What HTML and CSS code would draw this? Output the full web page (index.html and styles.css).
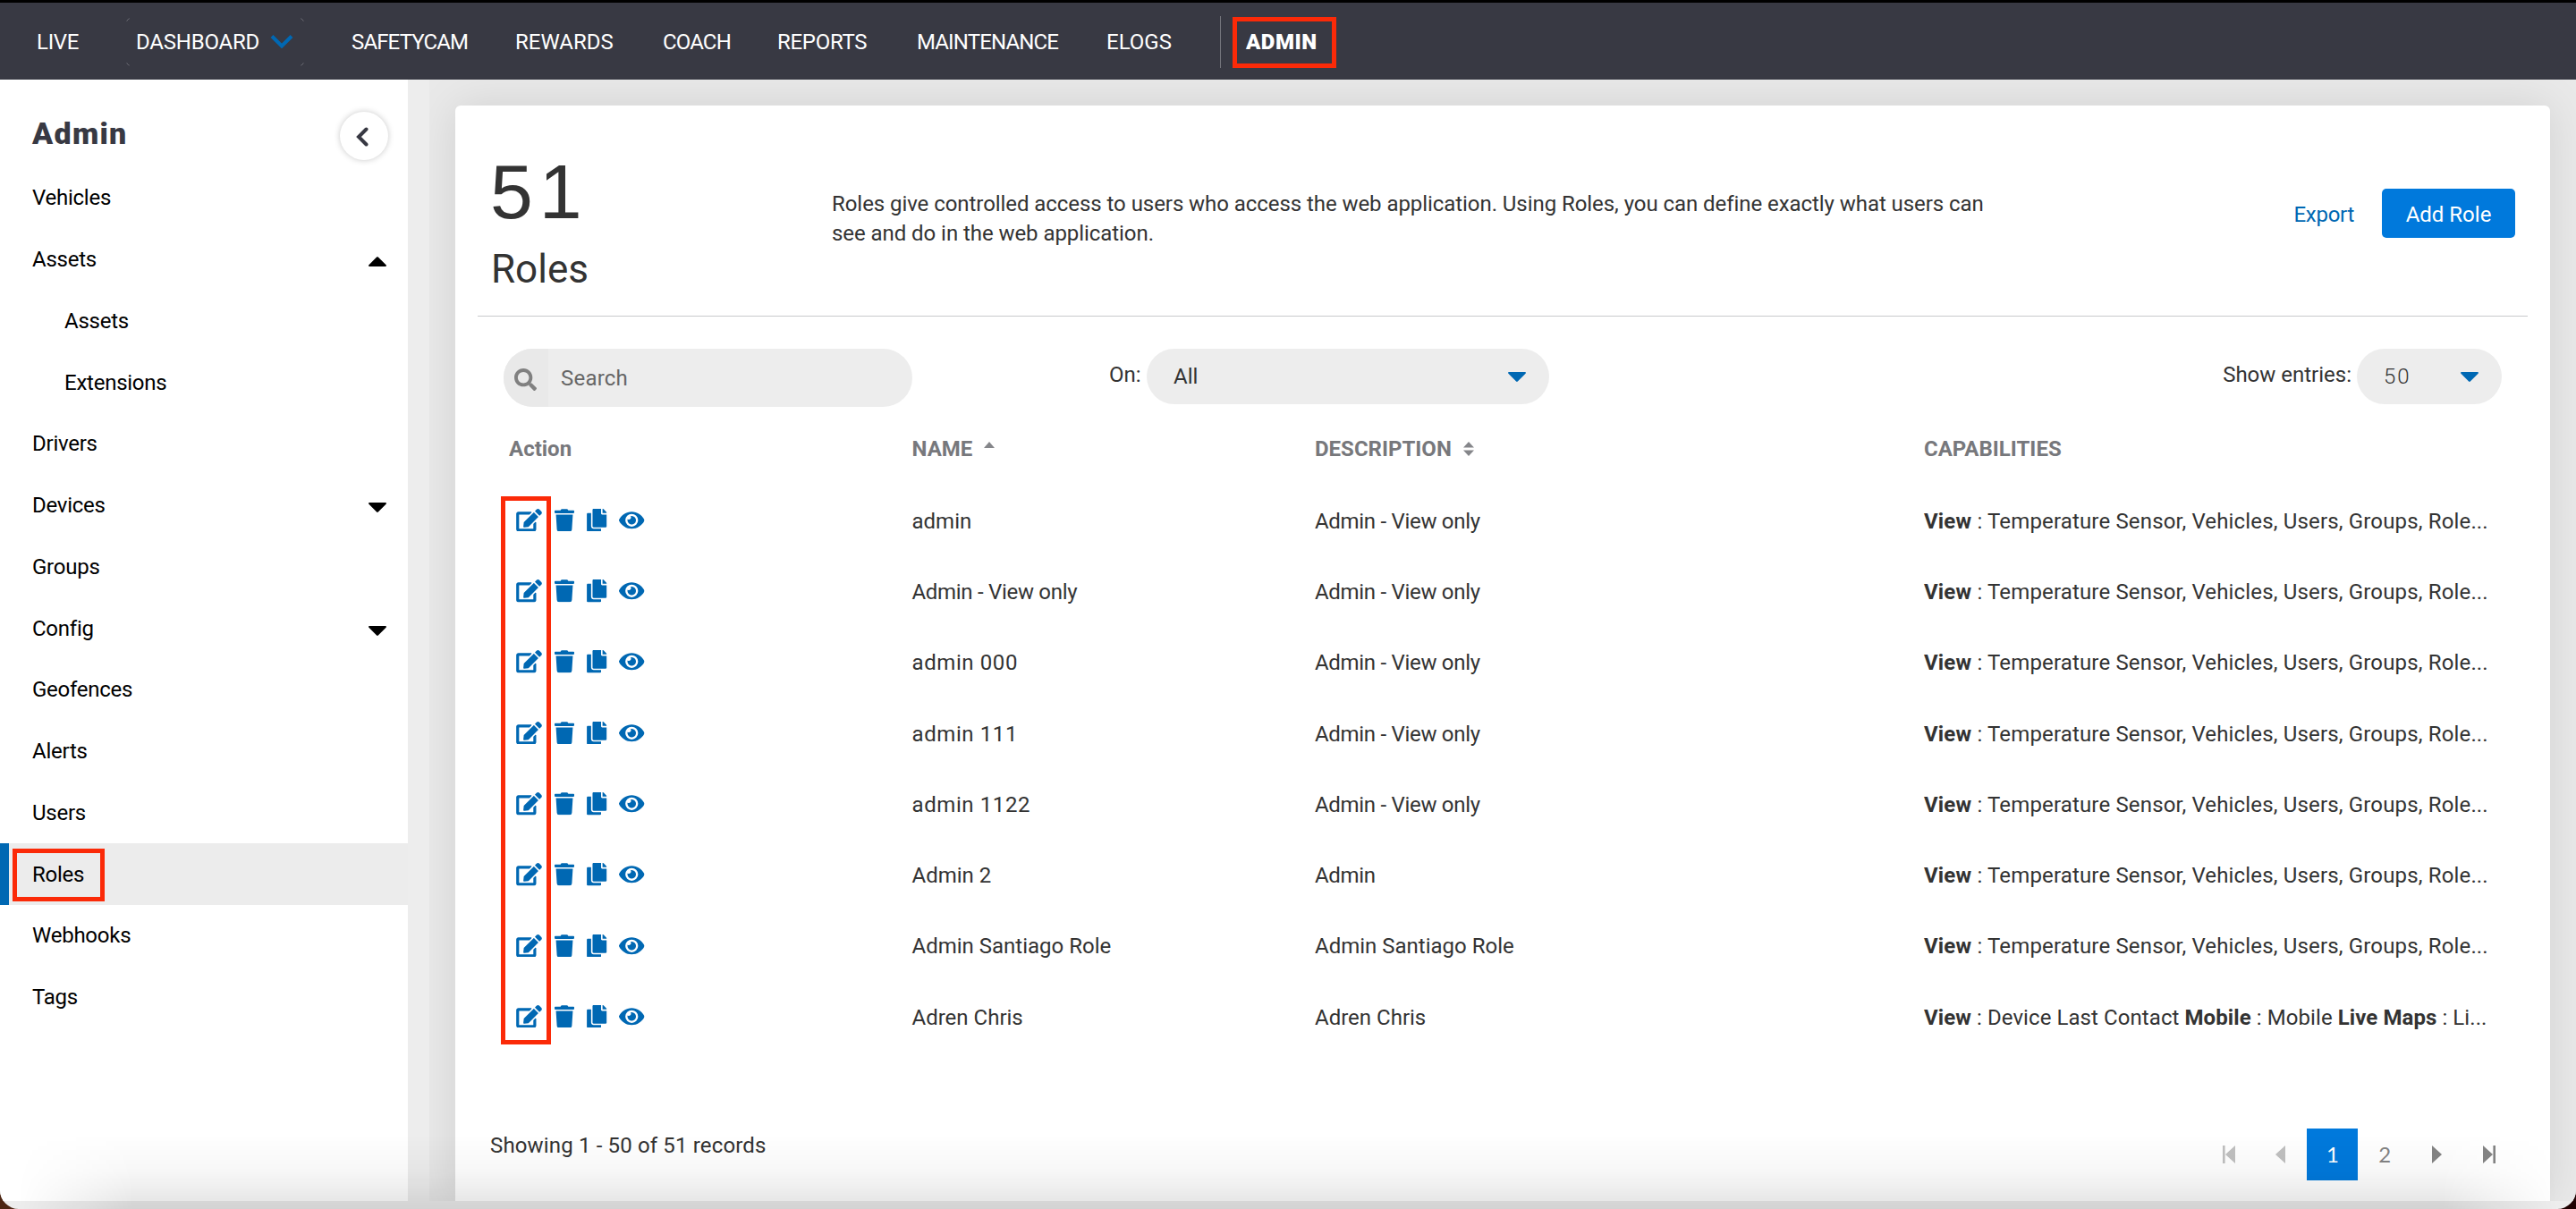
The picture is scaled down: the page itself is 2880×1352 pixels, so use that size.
FILE: index.html
```html
<!DOCTYPE html>
<html lang="en">
<head>
<meta charset="utf-8">
<title>Admin - Roles</title>
<link rel="stylesheet" href="styles.css">
</head>
<body>
<svg class="sprite" aria-hidden="true">
  <symbol id="i-edit" viewBox="0 0 576 512"><path d="M402.6 83.2l90.2 90.2c3.8 3.8 3.8 10 0 13.8L274.4 405.6l-92.8 10.3c-12.4 1.4-22.9-9.1-21.5-21.5l10.3-92.8L388.8 83.2c3.8-3.8 10-3.8 13.8 0zm162-22.9l-48.8-48.8c-15.2-15.2-39.9-15.2-55.2 0l-35.4 35.4c-3.8 3.8-3.8 10 0 13.8l90.2 90.2c3.8 3.8 10 3.8 13.8 0l35.4-35.4c15.2-15.3 15.2-40 0-55.2zM384 346.2V448H64V128h229.8c3.2 0 6.2-1.3 8.5-3.5l40-40c7.6-7.6 2.2-20.5-8.5-20.5H48C21.5 64 0 85.5 0 112v352c0 26.5 21.5 48 48 48h352c26.5 0 48-21.5 48-48V306.2c0-10.7-12.9-16-20.5-8.5l-40 40c-2.2 2.3-3.5 5.3-3.5 8.5z"/></symbol>
  <symbol id="i-trash" viewBox="0 0 448 512"><path d="M432 32H312l-9.4-18.7A24 24 0 0 0 281.1 0H166.8a23.72 23.72 0 0 0-21.4 13.3L136 32H16A16 16 0 0 0 0 48v32a16 16 0 0 0 16 16h416a16 16 0 0 0 16-16V48a16 16 0 0 0-16-16zM32 128l21.2 339a48 48 0 0 0 47.9 45h245.800a48 48 0 0 0 47.900-45L416 128z"/></symbol>
  <symbol id="i-copy" viewBox="0 0 448 512"><path d="M320 448v40c0 13.255-10.745 24-24 24H24c-13.255 0-24-10.745-24-24V120c0-13.255 10.745-24 24-24h72v296c0 30.879 25.121 56 56 56h168zm0-344V0H152c-13.255 0-24 10.745-24 24v368c0 13.255 10.745 24 24 24h272c13.255 0 24-10.745 24-24V128H344c-13.2 0-24-10.8-24-24zm120.971-31.029L375.029 7.029A24 24 0 0 0 358.059 0H352v96h96v-6.059a24 24 0 0 0-7.029-16.97z"/></symbol>
  <symbol id="i-eye" viewBox="0 0 576 512"><path d="M572.52 241.4C518.29 135.59 410.93 64 288 64S57.68 135.64 3.48 241.41a32.35 32.35 0 0 0 0 29.19C57.71 376.41 165.07 448 288 448s230.32-71.64 284.52-177.41a32.35 32.35 0 0 0 0-29.19zM288 400a144 144 0 1 1 144-144 143.93 143.93 0 0 1-144 144zm0-240a95.31 95.31 0 0 0-25.31 3.79 47.85 47.85 0 0 1-66.9 66.9A95.78 95.78 0 1 0 288 160z"/></symbol>
  <symbol id="i-search" viewBox="0 0 512 512"><path d="M505 442.7L405.3 343c-4.5-4.5-10.6-7-17-7H372c27.6-35.3 44-79.7 44-128C416 93.1 322.9 0 208 0S0 93.1 0 208s93.1 208 208 208c48.3 0 92.7-16.4 128-44v16.3c0 6.4 2.5 12.5 7 17l99.7 99.7c9.4 9.4 24.6 9.4 33.9 0l28.3-28.3c9.4-9.4 9.4-24.6.1-34zM208 336c-70.7 0-128-57.2-128-128 0-70.7 57.2-128 128-128 70.7 0 128 57.2 128 128 0 70.7-57.2 128-128 128z"/></symbol>
  <symbol id="i-caret" viewBox="0 0 20 11"><path d="M1.2 0h17.6c1 0 1.5 1 .8 1.7l-8.8 8.8c-.5.5-1.2.5-1.7 0L.4 1.7C-.3 1 .2 0 1.2 0z"/></symbol>
</svg>

<div class="window">
  <nav class="topbar">
    <a class="tight">LIVE</a>
    <a class="dashboard">DASHBOARD
      <svg class="chevron" viewBox="0 0 26 15"><path d="M2 1.5l11 11 11-11"/></svg>
    </a>
    <a class="tighter">SAFETYCAM</a>
    <a>REWARDS</a>
    <a class="tighter">COACH</a>
    <a class="tight">REPORTS</a>
    <a class="tighter">MAINTENANCE</a>
    <a>ELOGS</a>
    <a class="current">ADMIN<span class="mark mark-nav"></span></a>
  </nav>

  <div class="body">
    <aside class="sidebar">
      <header class="side-head">
        <h2>Admin</h2>
        <button class="collapse"><svg viewBox="0 0 14 22"><path d="M11.5 2.5L3 11l8.500 8.500"/></svg></button>
      </header>
      <ul class="menu">
        <li>Vehicles</li>
        <li>Assets<svg class="caret up"><use href="#i-caret"/></svg></li>
        <li class="sub">Assets</li>
        <li class="sub">Extensions</li>
        <li>Drivers</li>
        <li>Devices<svg class="caret"><use href="#i-caret"/></svg></li>
        <li>Groups</li>
        <li>Config<svg class="caret"><use href="#i-caret"/></svg></li>
        <li>Geofences</li>
        <li>Alerts</li>
        <li>Users</li>
        <li class="active">Roles<span class="mark mark-side"></span></li>
        <li>Webhooks</li>
        <li>Tags</li>
      </ul>
    </aside>

    <main class="content">
      <section class="card">
        <header class="card-head">
          <div class="count"><strong>51</strong><span>Roles</span></div>
          <p>Roles give controlled access to users who access the web application. Using Roles, you can define exactly what users can<br>see and do in the web application.</p>
          <div class="buttons"><a class="export">Export</a><button class="add">Add Role</button></div>
        </header>

        <div class="filters">
          <div class="search"><span class="search-icon"><svg><use href="#i-search"/></svg></span><span class="search-text">Search</span></div>
          <label class="on">On:</label>
          <div class="select select-on">All<svg class="caret blue"><use href="#i-caret"/></svg></div>
          <label class="entries">Show entries:</label>
          <div class="select select-entries"><span>50</span><svg class="caret blue"><use href="#i-caret"/></svg></div>
        </div>

        <div class="table">
          <div class="row head">
            <span>Action</span>
            <span>NAME<svg class="sort" viewBox="0 0 12 16"><path d="M0 7l6-7 6 7z"/></svg></span>
            <span>DESCRIPTION<svg class="sort" viewBox="0 0 12 16"><path d="M0 6.500l6-6.500 6 6.500zM0 9.500h12l-6 6.500z"/></svg></span>
            <span>CAPABILITIES</span>
          </div>
          <div class="row">
            <span class="actions"><svg class="edit"><use href="#i-edit"/></svg><svg class="trash"><use href="#i-trash"/></svg><svg class="copy"><use href="#i-copy"/></svg><svg class="eye"><use href="#i-eye"/></svg></span>
            <span>admin</span><span class="narrow">Admin - View only</span><span class="caps"><b>View</b> : Temperature Sensor, Vehicles, Users, Groups, Role...</span>
          </div>
          <div class="row">
            <span class="actions"><svg class="edit"><use href="#i-edit"/></svg><svg class="trash"><use href="#i-trash"/></svg><svg class="copy"><use href="#i-copy"/></svg><svg class="eye"><use href="#i-eye"/></svg></span>
            <span class="narrow">Admin - View only</span><span class="narrow">Admin - View only</span><span class="caps"><b>View</b> : Temperature Sensor, Vehicles, Users, Groups, Role...</span>
          </div>
          <div class="row">
            <span class="actions"><svg class="edit"><use href="#i-edit"/></svg><svg class="trash"><use href="#i-trash"/></svg><svg class="copy"><use href="#i-copy"/></svg><svg class="eye"><use href="#i-eye"/></svg></span>
            <span class="wide">admin 000</span><span class="narrow">Admin - View only</span><span class="caps"><b>View</b> : Temperature Sensor, Vehicles, Users, Groups, Role...</span>
          </div>
          <div class="row">
            <span class="actions"><svg class="edit"><use href="#i-edit"/></svg><svg class="trash"><use href="#i-trash"/></svg><svg class="copy"><use href="#i-copy"/></svg><svg class="eye"><use href="#i-eye"/></svg></span>
            <span class="wide">admin 111</span><span class="narrow">Admin - View only</span><span class="caps"><b>View</b> : Temperature Sensor, Vehicles, Users, Groups, Role...</span>
          </div>
          <div class="row">
            <span class="actions"><svg class="edit"><use href="#i-edit"/></svg><svg class="trash"><use href="#i-trash"/></svg><svg class="copy"><use href="#i-copy"/></svg><svg class="eye"><use href="#i-eye"/></svg></span>
            <span class="wide">admin 1122</span><span class="narrow">Admin - View only</span><span class="caps"><b>View</b> : Temperature Sensor, Vehicles, Users, Groups, Role...</span>
          </div>
          <div class="row">
            <span class="actions"><svg class="edit"><use href="#i-edit"/></svg><svg class="trash"><use href="#i-trash"/></svg><svg class="copy"><use href="#i-copy"/></svg><svg class="eye"><use href="#i-eye"/></svg></span>
            <span>Admin 2</span><span class="narrow">Admin</span><span class="caps"><b>View</b> : Temperature Sensor, Vehicles, Users, Groups, Role...</span>
          </div>
          <div class="row">
            <span class="actions"><svg class="edit"><use href="#i-edit"/></svg><svg class="trash"><use href="#i-trash"/></svg><svg class="copy"><use href="#i-copy"/></svg><svg class="eye"><use href="#i-eye"/></svg></span>
            <span>Admin Santiago Role</span><span>Admin Santiago Role</span><span class="caps"><b>View</b> : Temperature Sensor, Vehicles, Users, Groups, Role...</span>
          </div>
          <div class="row">
            <span class="actions"><svg class="edit"><use href="#i-edit"/></svg><svg class="trash"><use href="#i-trash"/></svg><svg class="copy"><use href="#i-copy"/></svg><svg class="eye"><use href="#i-eye"/></svg></span>
            <span>Adren Chris</span><span>Adren Chris</span><span class="caps-mixed"><b>View</b> : Device Last Contact <b>Mobile</b> : Mobile <b>Live Maps</b> : Li...</span>
          </div>
          <span class="mark mark-edit"></span>
        </div>

        <footer class="card-foot">
          <span class="showing">Showing 1 - 50 of 51 records</span>
          <div class="pages">
            <a class="off"><svg class="end" viewBox="0 0 14 20"><path d="M0 0h2.600v20H0zM14 0v20L3 10z"/></svg></a>
            <a class="off"><svg class="step" viewBox="0 0 11 20"><path d="M11 0v20L0 10z"/></svg></a>
            <a class="on-page">1</a>
            <a class="page">2</a>
            <a><svg class="step" viewBox="0 0 11 20"><path d="M0 0v20l11-10z"/></svg></a>
            <a><svg class="end" viewBox="0 0 14 20"><path d="M11.400 0H14v20h-2.600zM0 0v20l11-10z"/></svg></a>
          </div>
        </footer>
      </section>
    </main>
  </div>
  <div class="shade"></div>
</div>
</body>
</html>
```
FILE: styles.css
```css
* { box-sizing: border-box; }

body {
  margin: 0;
  background: linear-gradient(90deg, #4d2613, #200202);
  font: 24px/33px Roboto, "Liberation Sans", sans-serif;
  color: #333;
}

.sprite { position: absolute; width: 0; height: 0; }

svg { display: block; fill: currentColor; flex: none; }

.window {
  position: relative;
  display: flex;
  flex-direction: column;
  width: 2880px;
  height: 1352px;
  border-top: 3px solid #000;
  border-radius: 0 0 21px 21px;
  background: #ededed;
  overflow: hidden;
}

/* top navigation */
.topbar {
  display: grid;
  grid-template-columns: 100px 252px 183px 165px 128px 156px 212px 127px auto;
  justify-content: start;
  align-items: center;
  height: 86px;
  flex: none;
  padding: 2px 0 0 41px;
  background: #383943;
  color: #fff;
}

.tight { letter-spacing: -.3px; }
.tighter { letter-spacing: -.85px; }

.dashboard {
  position: relative;
  display: flex;
  align-items: center;
  gap: 12px;
  width: 199px;
  height: 54px;
  padding-left: 11px;
  letter-spacing: -.2px;
}

.dashboard::before {
  content: "";
  position: absolute;
  inset: 0;
  border: 1px solid #6d6e76;
  border-radius: 5px;
  -webkit-mask:
    linear-gradient(#000, #000) 0 0 / 4px 4px no-repeat,
    linear-gradient(#000, #000) 100% 0 / 4px 4px no-repeat,
    linear-gradient(#000, #000) 0 100% / 4px 4px no-repeat,
    linear-gradient(#000, #000) 100% 100% / 4px 4px no-repeat;
}

.chevron {
  width: 26px;
  height: 15px;
  margin-top: -2px;
  fill: none;
  stroke: #0068b3;
  stroke-width: 4;
}

.current {
  position: relative;
  height: 58px;
  padding-left: 28px;
  border-left: 1px solid #74757c;
  font-weight: 900;
  line-height: 58px;
  letter-spacing: .5px;
}

/* red callout frames */
.mark { position: absolute; border: 5px solid #fb2a08; }
.mark-nav { left: 13px; top: 1px; width: 116px; height: 57px; }
.mark-side { left: 14px; top: 6px; width: 103px; height: 59px; }
.mark-edit { left: -9px; top: 94px; width: 56px; height: 613px; }

.body { display: flex; flex: 1; height: 1254px; }

/* sidebar */
.sidebar { width: 456px; height: 1254px; background: #fff; color: #000; }

.side-head {
  display: flex;
  justify-content: space-between;
  align-items: center;
  height: 98px;
  padding: 28px 22px 0 36px;
}

.side-head h2 {
  margin: -6px 0 0;
  font-size: 34px;
  font-weight: 900;
  letter-spacing: 1.3px;
  color: #383943;
}

.collapse {
  display: grid;
  place-items: center;
  width: 54px;
  height: 54px;
  padding: 2px 4px 0 0;
  border: 0;
  border-radius: 50%;
  background: #fff;
  box-shadow: 0 0 7px rgba(0, 0, 0, .22);
  color: #383943;
}

.collapse svg { width: 14px; height: 22px; fill: none; stroke: currentColor; stroke-width: 4; stroke-linecap: round; }

.menu { margin: 0; padding: 0; list-style: none; }

.menu li {
  position: relative;
  display: flex;
  align-items: center;
  justify-content: space-between;
  height: 68.75px;
  padding: 1px 24px 0 36px;
  letter-spacing: -.25px;
}

.menu .sub { padding-left: 72px; }

.menu .active { padding-left: 26px; border-left: 10px solid #0068b3; background: #ececec; }
.menu .active .mark { left: 4px; }

.caret { width: 20px; height: 11px; margin-top: 4px; }
.up { transform: scaleY(-1); }

/* content */
.content {
  flex: 1;
  height: 1254px;
  margin-left: 24px;
  padding: 29px 29px 0;
  background: #e9e9e9;
  overflow: hidden;
}

.card {
  height: 1225px;
  border-radius: 6px 6px 0 0;
  background: #fff;
  box-shadow: 0 0 50px rgba(0, 0, 0, .1);
}

.card-head {
  display: grid;
  grid-template-columns: 382px 1fr auto;
  align-items: start;
  height: 236px;
  margin: 0 25px;
  padding: 46px 14px 0;
  border-bottom: 1px solid #c8cacb;
}

.count { display: flex; flex-direction: column; gap: 11px; }
.count strong { font: 400 86px/100px "Liberation Sans", Arial, sans-serif; letter-spacing: 7px; }
.count span { padding-left: 1px; font-size: 44px; line-height: 52px; }

.card-head p { margin: 48px 0 0; white-space: nowrap; letter-spacing: -.06px; }

.buttons { display: flex; align-items: center; gap: 31px; margin-top: 47px; }
.export { padding-top: 3px; color: #0068b3; letter-spacing: -.3px; }

.add {
  width: 149px;
  height: 55px;
  padding: 3px 0 0;
  border: 0;
  border-radius: 5px;
  background: #0079dc;
  color: #fff;
  font: inherit;
}

.filters { display: flex; align-items: flex-start; height: 107px; padding: 36px 54px 0; }

.search { display: flex; width: 457px; height: 65px; border-radius: 33px; background: #ededed; overflow: hidden; }
.search-icon { width: 50px; padding: 22px 0 0 12px; background: #e9e9e9; color: #808080; }
.search-icon svg { width: 25px; height: 25px; }
.search-text { padding-left: 14px; line-height: 66px; letter-spacing: .2px; color: #666; }

.filters label { line-height: 58px; }
.on { width: 42px; margin-left: 220px; }
.entries { margin-left: auto; margin-right: 6px; }

.select {
  display: flex;
  align-items: center;
  justify-content: space-between;
  height: 62px;
  padding: 0 26px 0 30px;
  border-radius: 31px;
  background: #ededed;
}

.select-on { width: 450px; }
.select-entries { width: 162px; font-weight: 300; }
.select-entries span { letter-spacing: 2px; }
.select .caret { margin-top: 0; }
.blue { color: #0068b3; }

/* table */
.table { position: relative; margin-left: 60px; }

.row {
  display: grid;
  grid-template-columns: 450.5px 450.5px 681px auto;
  align-items: center;
  justify-content: start;
  height: 79.3px;
  padding-top: 1px;
  white-space: nowrap;
}

.row.head { height: 82px; padding-top: 0; font-weight: 700; color: #77787c; }
.head span { display: flex; align-items: center; }
.sort { width: 12px; height: 16px; margin-left: 13px; color: #85868a; }

.actions { display: flex; align-items: center; padding-left: 8px; margin-top: -3px; color: #0068b3; }
.edit { width: 29px; height: 25.5px; }
.trash { width: 22px; height: 25.5px; margin-left: 14px; }
.copy { width: 22.5px; height: 25.5px; margin-left: 14px; }
.eye { width: 28.5px; height: 25.5px; margin-left: 13.5px; }
.narrow { letter-spacing: -.3px; }
.wide { letter-spacing: .6px; }
.caps { letter-spacing: .16px; }
.caps-mixed { letter-spacing: .08px; }

/* footer */
.card-foot { display: flex; justify-content: space-between; padding: 85px 40px 0 39px; }
.showing { line-height: 39px; letter-spacing: .15px; }
.pages { display: flex; gap: 1.2px; font-family: Lato, sans-serif; color: #848484; }
.pages a { display: grid; place-items: center; width: 57px; height: 58px; }
.pages .on-page { padding-bottom: 2px; background: #0079dc; color: #fff; }
.pages .page { padding-bottom: 2px; }
.pages .off { color: #c0c0c0; }
.end { width: 14px; height: 20px; }
.step { width: 11px; height: 20px; }

/* soft shadow along the lower window edge */
.shade {
  position: absolute;
  left: 0;
  right: 0;
  bottom: 0;
  height: 84px;
  background: linear-gradient(rgba(0, 0, 0, 0), rgba(0, 0, 0, .03) 50%, rgba(0, 0, 0, .11));
  -webkit-mask: linear-gradient(90deg, transparent 20px, #000 150px, #000 2730px, transparent 2860px);
  pointer-events: none;
}
```
